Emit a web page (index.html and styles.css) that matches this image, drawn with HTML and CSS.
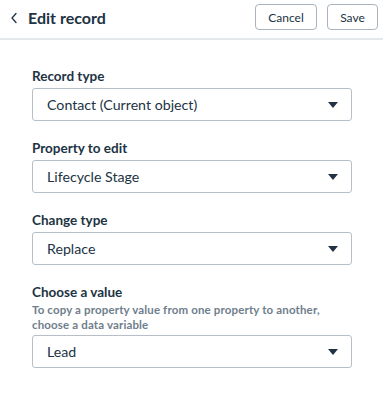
FILE: index.html
```html
<!DOCTYPE html>
<html>
<head>
<meta charset="utf-8">
<link rel="stylesheet" href="styles.css">
</head>
<body>
<div class="header">
  <div class="title-wrap">
    <svg class="back" width="8" height="12" viewBox="0 0 8 12"><path d="M6 1.5 L2 6 L6 10.5" fill="none" stroke="#213343" stroke-width="1.3" stroke-linecap="round" stroke-linejoin="round"/></svg>
    <h1 class="title">Edit record</h1>
  </div>
  <div class="actions">
    <button class="btn btn-cancel">Cancel</button>
    <button class="btn btn-save">Save</button>
  </div>
</div>
<div class="form">
  <div class="field">
    <div class="label">Record type</div>
    <div class="select"><span>Contact (Current object)</span><span class="caret"></span></div>
  </div>
  <div class="field">
    <div class="label">Property to edit</div>
    <div class="select"><span>Lifecycle Stage</span><span class="caret"></span></div>
  </div>
  <div class="field">
    <div class="label">Change type</div>
    <div class="select"><span>Replace</span><span class="caret"></span></div>
  </div>
  <div class="field">
    <div class="label">Choose a value</div>
    <div class="help">To copy a property value from one property to another, choose a data variable</div>
    <div class="select"><span>Lead</span><span class="caret"></span></div>
  </div>
</div>
</body>
</html>
```
FILE: styles.css
```css
* { box-sizing: border-box; }
html, body { margin: 0; padding: 0; background: #fff; }
body {
  font-family: "Lato", "Noto Sans", sans-serif;
  color: #213343;
  width: 383px;
}
.header {
  height: 40px;
  border-bottom: 2px solid #e5e8eb;
  display: flex;
  align-items: center;
  justify-content: space-between;
  padding: 0 5px 0 10px;
}
.title-wrap { display: flex; align-items: center; gap: 10px; padding-bottom: 3px; }
.back { display: block; }
.title {
  margin: 0;
  font-size: 16px;
  font-weight: 700;
}
.actions { display: flex; gap: 10px; padding-bottom: 4px; }
.btn {
  font-family: inherit;
  font-size: 12px;
  color: #213343;
  background: #fff;
  border: 1px solid #a9b4bf;
  border-radius: 4px;
  height: 26px;
  padding: 0;
}
.btn-cancel { width: 62px; }
.btn-save { width: 51px; }
.form {
  padding: 27px 31px 0 32px;
  display: flex;
  flex-direction: column;
  gap: 18px;
}
.field { display: flex; flex-direction: column; }
.label {
  font-size: 13.5px;
  font-weight: 700;
  line-height: 18px;
  margin-bottom: 3px;
}
.help {
  font-size: 11.5px;
  letter-spacing: 0.15px;
  font-weight: 700;
  color: #6f7e8c;
  line-height: 15px;
  margin-top: -2px;
  margin-bottom: 3px;
  max-width: 295px;
}
.select {
  height: 33px;
  border: 1px solid #b6bfc8;
  border-radius: 3px;
  display: flex;
  align-items: center;
  justify-content: space-between;
  padding: 0 13px 0 14px;
  font-size: 14.2px;
}
.caret {
  width: 0; height: 0;
  border-left: 5px solid transparent;
  border-right: 5px solid transparent;
  border-top: 6px solid #213343;
}
```
